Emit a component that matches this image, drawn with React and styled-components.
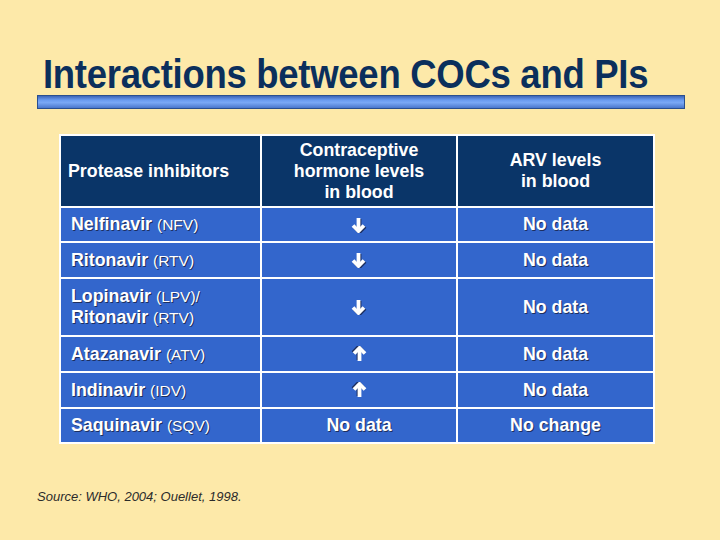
import React from 'react'
import styled, { createGlobalStyle } from 'styled-components'

const GlobalStyle = createGlobalStyle`
  html, body {
    margin: 0;
    padding: 0;
    background: #fde9a9;
  }
`

const Page = styled.div`
  width: 720px;
  height: 540px;
  background: #fde9a9;
  font-family: "Liberation Sans", Arial, sans-serif;
  padding-top: 52px;
  box-sizing: border-box;
  overflow: hidden;
`

const Title = styled.h1`
  margin: 0 0 0 43px;
  font-size: 40px;
  line-height: 44px;
  font-weight: bold;
  color: #0b2f5c;
  letter-spacing: -0.3px;
  transform: scaleX(0.912);
  transform-origin: left center;
  white-space: nowrap;
`

const Rule = styled.div`
  margin: -1px 0 0 37px;
  width: 648px;
  height: 14px;
  box-sizing: border-box;
  border: 1px solid #2a4f8f;
  background: linear-gradient(#3d65b8 0%, #6b9cf0 35%, #7aa8f5 55%, #4a77cc 100%);
`

const Table = styled.div`
  margin: 25px 0 0 59px;
  width: 596px;
  box-sizing: border-box;
  display: grid;
  grid-template-columns: 199px 194px 195px;
  grid-template-rows: 70px 33px 34px 56px 34px 34px 33px;
  gap: 2px;
  padding: 2px;
  background: #ffffff;
`

const Cell = styled.div`
  display: flex;
  align-items: center;
  justify-content: ${p => (p.$left ? 'flex-start' : 'center')};
  text-align: ${p => (p.$left ? 'left' : 'center')};
  padding-left: ${p => (p.$left ? (p.$head ? '7px' : '10px') : '0')};
  background: ${p => (p.$head ? '#0a3568' : '#3366cc')};
  color: #ffffff;
  font-size: 17.8px;
  line-height: 21px;
  font-weight: bold;
  text-shadow: ${p => (p.$head ? 'none' : '1px 1px 0 #1e2f5e')};
`

const Abbr = styled.span`
  font-weight: normal;
  font-size: 15.5px;
`

const Source = styled.div`
  margin: 45px 0 0 37px;
  font-size: 13px;
  font-style: italic;
  color: #2b2b2b;
`

const Arrow = ({ up }) => (
  <svg width="16" height="16" viewBox="0 0 16 16" style={{ transform: up ? 'rotate(180deg)' : 'none' }}>
    <path d="M7.5 1 V14" stroke="#1e2f5e" strokeWidth="3.8" fill="none" transform="translate(1 1)" />
    <path d="M2 8.5 L7.5 14 L13 8.5" stroke="#1e2f5e" strokeWidth="3.8" fill="none" transform="translate(1 1)" />
    <path d="M7.5 1 V14" stroke="#fff" strokeWidth="3.8" fill="none" />
    <path d="M2 8.5 L7.5 14 L13 8.5" stroke="#fff" strokeWidth="3.8" fill="none" strokeLinejoin="miter" />
  </svg>
)

const rows = [
  { name: 'Nelfinavir', abbr: '(NFV)', hormone: 'down', arv: 'No data' },
  { name: 'Ritonavir', abbr: '(RTV)', hormone: 'down', arv: 'No data' },
  { name: 'Lopinavir', abbr: '(LPV)/', name2: 'Ritonavir', abbr2: '(RTV)', hormone: 'down', arv: 'No data' },
  { name: 'Atazanavir', abbr: '(ATV)', hormone: 'up', arv: 'No data' },
  { name: 'Indinavir', abbr: '(IDV)', hormone: 'up', arv: 'No data' },
  { name: 'Saquinavir', abbr: '(SQV)', hormone: 'No data', arv: 'No change' },
]

export default function App() {
  return (
    <Page>
      <GlobalStyle />
      <Title>Interactions between COCs and PIs</Title>
      <Rule />
      <Table>
        <Cell $head $left>Protease inhibitors</Cell>
        <Cell $head>Contraceptive<br />hormone levels<br />in blood</Cell>
        <Cell $head>ARV levels<br />in blood</Cell>
        {rows.map(r => (
          <React.Fragment key={r.name + r.abbr}>
            <Cell $left>
              <div>
                {r.name} <Abbr>{r.abbr}</Abbr>
                {r.name2 && (
                  <>
                    <br />
                    {r.name2} <Abbr>{r.abbr2}</Abbr>
                  </>
                )}
              </div>
            </Cell>
            <Cell>
              {r.hormone === 'down' ? <Arrow /> : r.hormone === 'up' ? <Arrow up /> : r.hormone}
            </Cell>
            <Cell>{r.arv}</Cell>
          </React.Fragment>
        ))}
      </Table>
      <Source>Source: WHO, 2004; Ouellet, 1998.</Source>
    </Page>
  )
}
